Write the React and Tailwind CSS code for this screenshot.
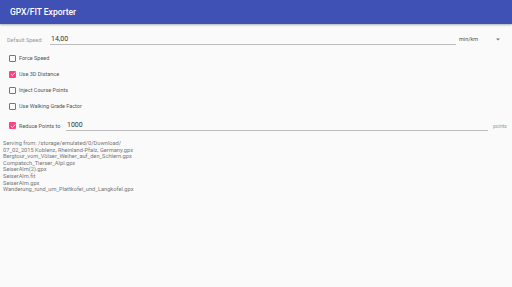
import { useState } from "react"

const FILES = [
  "Serving from: /storage/emulated/0/Download/",
  "07_02_2015 Koblenz, Rheinland-Pfalz, Germany.gpx",
  "Bergtour_vom_Völser_Weiher_auf_den_Schlern.gpx",
  "Compatsch_Tierser_Alpl.gpx",
  "SeiserAlm(2).gpx",
  "SeiserAlm.fit",
  "SeiserAlm.gpx",
  "Wanderung_rund_um_Plattkofel_und_Langkofel.gpx",
]

function Box({ checked, onToggle }) {
  return checked ? (
    <div className="w-[7px] h-[7px] rounded-[1px] bg-[#FF4081] flex items-center justify-center" onClick={onToggle}>
      <svg width="6" height="6" viewBox="0 0 10 10">
        <path d="M1.5 5.2 L4 7.6 L8.6 2.6" fill="none" stroke="white" strokeWidth="1.5" />
      </svg>
    </div>
  ) : (
    <div className="w-[7px] h-[7px] rounded-[1px] border border-[#757575]" onClick={onToggle} />
  )
}

function Check({ checked, label, onToggle }) {
  return (
    <div className="flex items-center h-[16px] cursor-pointer">
      <Box checked={checked} onToggle={onToggle} />
      <span className="ml-[3px] text-[5.5px] text-[#555]">{label}</span>
    </div>
  )
}

export default function App() {
  const [opts, setOpts] = useState({ force: false, dist3d: true, inject: false, walking: false, reduce: true })
  const toggle = (k) => setOpts((o) => ({ ...o, [k]: !o[k] }))

  return (
    <div className="w-[512px] h-[287px] bg-[#FAFAFA] overflow-hidden" style={{ fontFamily: "Roboto, 'Liberation Sans', sans-serif" }}>
      {/* Toolbar */}
      <div className="h-[24px] bg-[#3F51B5] flex items-center pl-[10px] shadow-[0_1px_2px_rgba(0,0,0,0.3)]">
        <span className="text-white text-[8.5px] font-medium">GPX/FIT Exporter</span>
      </div>

      {/* Default speed */}
      <div className="flex items-end h-[10px] mt-[11px] pl-[7px] pr-[12px]">
        <span className="w-[43px] text-[5.5px] text-[#999] pb-[2px] leading-none">Default Speed:</span>
        <div className="w-[406px] border-b border-[#BDBDBD] h-[10px] flex items-end pl-[1px] pb-[1px]">
          <span className="text-[7px] text-[#333] leading-none">14,00</span>
        </div>
        <div className="flex-1 flex items-end justify-between pl-[3px] pb-[3px]">
          <span className="text-[5.5px] text-[#555] leading-none">min/km</span>
          <svg width="4" height="3" viewBox="0 0 4 2" className="mb-[1px]">
            <path d="M0 0 L4 0 L2 2 Z" fill="#757575" />
          </svg>
        </div>
      </div>

      {/* Options */}
      <div className="flex flex-col pl-[9px] mt-[5px]">
        <Check checked={opts.force} label="Force Speed" onToggle={() => toggle("force")} />
        <Check checked={opts.dist3d} label="Use 3D Distance" onToggle={() => toggle("dist3d")} />
        <Check checked={opts.inject} label="Inject Course Points" onToggle={() => toggle("inject")} />
        <Check checked={opts.walking} label="Use Walking Grade Factor" onToggle={() => toggle("walking")} />
      </div>

      {/* Reduce points */}
      <div className="flex items-end h-[12px] mt-[5px] pl-[9px] pr-[5px]">
        <div className="flex items-center pb-[1px]">
          <Box checked={opts.reduce} onToggle={() => toggle("reduce")} />
          <span className="ml-[3px] w-[47px] text-[5.5px] text-[#555]">Reduce Points to</span>
        </div>
        <div className="w-[422px] border-b border-[#BDBDBD] h-[10px] flex items-end pl-[1px] pb-[1px]">
          <span className="text-[7px] text-[#333] leading-none">1000</span>
        </div>
        <span className="ml-[5px] text-[5px] text-[#999] pb-[2px] leading-none">points</span>
      </div>

      {/* File list */}
      <div className="mt-[9px] pl-[3px] flex flex-col">
        {FILES.map((f) => (
          <span key={f} className="text-[5.7px] leading-[6.6px] text-[#777]">{f}</span>
        ))}
      </div>
    </div>
  )
}
